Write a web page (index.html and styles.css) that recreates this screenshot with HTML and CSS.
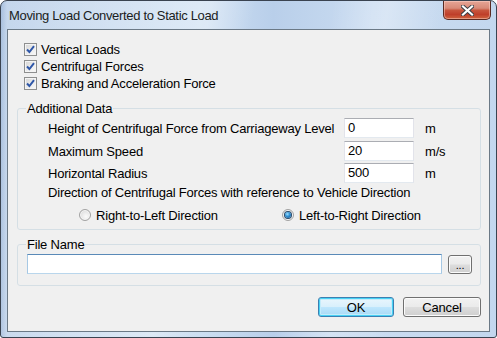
FILE: index.html
```html
<!DOCTYPE html>
<html>
<head>
<meta charset="utf-8">
<link rel="stylesheet" href="styles.css">
</head>
<body>
<div class="window">
  <div class="titlebar">
    <span class="title">Moving Load Converted to Static Load</span>
    <button class="close" aria-label="Close">
      <svg width="13" height="11" viewBox="0 0 13 11">
        <path d="M2 1.5 L11 9.5 M11 1.5 L2 9.5" stroke="#3a3f46" stroke-width="4" stroke-linecap="square"/>
        <path d="M2 1.5 L11 9.5 M11 1.5 L2 9.5" stroke="#ffffff" stroke-width="2.2" stroke-linecap="square"/>
      </svg>
    </button>
  </div>
  <div class="client">
    <div class="checks">
      <label class="check"><span class="cb"><svg width="9" height="9" viewBox="0 0 9 9"><path d="M1 4.5 L3.4 7 L8 1.2" fill="none" stroke="#2f57a8" stroke-width="2"/></svg></span>Vertical Loads</label>
      <label class="check"><span class="cb"><svg width="9" height="9" viewBox="0 0 9 9"><path d="M1 4.5 L3.4 7 L8 1.2" fill="none" stroke="#2f57a8" stroke-width="2"/></svg></span>Centrifugal Forces</label>
      <label class="check"><span class="cb"><svg width="9" height="9" viewBox="0 0 9 9"><path d="M1 4.5 L3.4 7 L8 1.2" fill="none" stroke="#2f57a8" stroke-width="2"/></svg></span>Braking and Acceleration Force</label>
    </div>

    <fieldset class="group data">
      <legend>Additional Data</legend>
      <div class="field first"><span class="flabel">Height of Centrifugal Force from Carriageway Level</span><span class="textbox">0</span><span class="unit">m</span></div>
      <div class="field second"><span class="flabel">Maximum Speed</span><span class="textbox">20</span><span class="unit">m/s</span></div>
      <div class="field third"><span class="flabel">Horizontal Radius</span><span class="textbox">500</span><span class="unit">m</span></div>
      <div class="dir">Direction of Centrifugal Forces with reference to Vehicle Direction</div>
      <div class="radios">
        <label class="radio r1"><span class="rb"></span>Right-to-Left Direction</label>
        <label class="radio"><span class="rb on"></span>Left-to-Right Direction</label>
      </div>
    </fieldset>

    <fieldset class="group file">
      <legend>File Name</legend>
      <div class="filerow"><span class="textbox wide"></span><button class="btn browse">...</button></div>
    </fieldset>

    <div class="actions">
      <button class="btn ok">OK</button>
      <button class="btn cancel">Cancel</button>
    </div>
  </div>
</div>
</body>
</html>
```

FILE: styles.css
```css
html, body {
  margin: 0;
  padding: 0;
  background: #ffffff;
}

body {
  font-family: "Liberation Sans", Arial, sans-serif;
  font-size: 13px;
  letter-spacing: -0.2px;
  color: #000;
}

.window {
  width: 497px;
  height: 338px;
  box-sizing: border-box;
  border: 1px solid #3a4350;
  border-radius: 7px 7px 3px 3px;
  padding: 0 6px 5px 6px;
  display: flex;
  flex-direction: column;
  background:
    linear-gradient(100deg, rgba(255,255,255,0) 0%, rgba(255,255,255,0.35) 38%, rgba(255,255,255,0) 46%, rgba(255,255,255,0) 60%, rgba(255,255,255,0.3) 70%, rgba(255,255,255,0) 80%),
    linear-gradient(to right, #a9c0de 0px, #c4d6ec 6px, #cddff2 40%, #b9cfea 55%, #cadcf1 75%, #c3d7ee 100%);
  overflow: hidden;
}

.titlebar {
  height: 28px;
  display: flex;
  align-items: flex-start;
}

.title {
  padding-left: 2px;
  margin-top: 7px;
  line-height: 15px;
  letter-spacing: -0.33px;
  color: #1a1d22;
  flex: 1;
  white-space: nowrap;
}

.close {
  width: 48px;
  height: 19px;
  margin: 0 -1px 0 0;
  padding: 0;
  box-sizing: border-box;
  border: 1px solid #5a2a22;
  border-top: none;
  border-radius: 0 0 5px 5px;
  background: linear-gradient(#e6a596 0%, #d88a78 40%, #c7553d 52%, #bf3f2a 75%, #d0653f 100%);
  box-shadow: inset 0 0 0 1px rgba(255,220,210,0.45);
  display: flex;
  align-items: center;
  justify-content: center;
}

.client {
  flex: 1;
  border: 1px solid #6b7986;
  background: #f0f0f0;
  padding: 11px 8px 0 9px;
  display: flex;
  flex-direction: column;
}

.checks {
  margin-left: 7px;
  display: flex;
  flex-direction: column;
}

.check {
  height: 17px;
  display: flex;
  align-items: center;
  gap: 4px;
  white-space: nowrap;
}

.cb {
  width: 13px;
  height: 13px;
  box-sizing: border-box;
  border: 1px solid #8e8f8f;
  background: linear-gradient(135deg, #d4d4d4 0%, #ececec 55%, #fafafa 100%);
  box-shadow: inset 0 0 0 1px #f4f4f4;
  display: flex;
  align-items: center;
  justify-content: center;
  flex: none;
}

.group {
  margin: 0;
  border: 1px solid #d5dfe5;
  border-radius: 3px;
  min-width: 0;
}

.group legend {
  padding: 0 1px;
  line-height: 15px;
}

.data {
  margin-top: 9px;
  padding: 2px 8px 4px 30px;
}

.data legend {
  margin-left: -22px;
}

.field {
  height: 20px;
  display: flex;
  align-items: center;
}

.second {
  margin-top: 3px;
}

.third {
  margin-top: 2px;
}

.flabel {
  width: 296px;
  flex: none;
  white-space: nowrap;
}

.textbox {
  width: 70px;
  height: 20px;
  box-sizing: border-box;
  background: #ffffff;
  border: 1px solid #e2e3ea;
  border-top-color: #abadb3;
  border-bottom-color: #e3e9ef;
  padding: 0 3px;
  line-height: 18px;
  flex: none;
}

.unit {
  margin-left: 11px;
}

.dir {
  height: 20px;
  line-height: 20px;
  white-space: nowrap;
}

.radios {
  margin-top: 2px;
  height: 20px;
  display: flex;
  align-items: center;
}

.radio {
  display: flex;
  align-items: center;
  gap: 5px;
  white-space: nowrap;
}

.r1 {
  margin-left: 31px;
  width: 203px;
}

.rb {
  width: 12px;
  height: 12px;
  box-sizing: border-box;
  border-radius: 50%;
  border: 1px solid #a2a2a2;
  background: radial-gradient(circle at 60% 65%, #fbfbfb 0%, #e6e6e6 55%, #cfcfcf 100%);
  box-shadow: inset 0 0 0 1px #f6f6f6;
  flex: none;
  display: flex;
  align-items: center;
  justify-content: center;
}

.rb.on::after {
  content: "";
  width: 6px;
  height: 6px;
  border-radius: 50%;
  background: radial-gradient(circle at 40% 35%, #9fe0ff 0%, #2f8fd2 45%, #15508c 100%);
  box-shadow: 0 0 0 1px #2a4a6a;
}

.file {
  margin-top: 7px;
  padding: 2px 8px 11px 9px;
}

.file legend {
  margin-left: -1px;
}

.filerow {
  display: flex;
  align-items: flex-start;
  gap: 6px;
}

.textbox.wide {
  width: 415px;
  border-color: #a6c8e4;
  border-top-color: #5a8ab8;
  border-bottom-color: #b9d6ec;
}

.btn {
  font-family: "Liberation Sans", Arial, sans-serif;
  font-size: 13px;
  letter-spacing: -0.2px;
  color: #000;
  padding: 0;
  box-sizing: border-box;
  border: 1px solid #707070;
  border-radius: 3px;
  background: linear-gradient(#f2f2f2 0%, #ebebeb 48%, #dddddd 52%, #cfcfcf 100%);
  box-shadow: inset 0 0 0 1px #fbfbfb;
}

.browse {
  width: 24px;
  height: 19px;
  margin-top: 1px;
  line-height: 14px;
  font-size: 11px;
}

.actions {
  margin-top: 11px;
  display: flex;
  justify-content: flex-end;
  gap: 9px;
}

.ok, .cancel {
  height: 20px;
  line-height: 17px;
}

.ok {
  width: 76px;
  border-color: #3c7fb1;
  background: linear-gradient(#eaf6fd 0%, #d9f0fc 48%, #bee6fd 52%, #a7d9f5 100%);
  box-shadow: inset 0 0 0 1px #48d2f5, inset 0 0 0 2px #c4ecfb;
}

.cancel {
  width: 78px;
}
```
